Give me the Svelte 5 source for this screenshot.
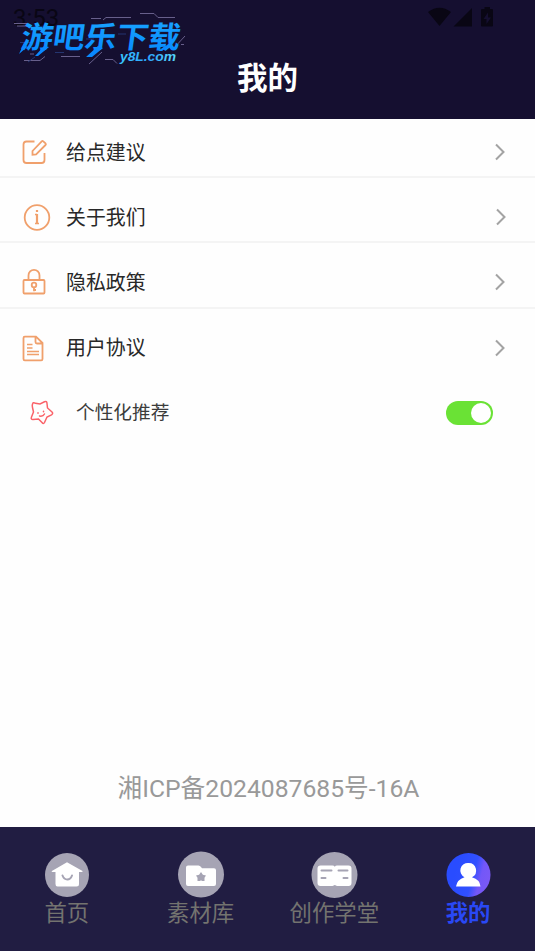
<script>
	let recommend = true;
	let current = 'mine';

	const menus = [
		{ id: 'suggest', name: '给点建议' },
		{ id: 'about', name: '关于我们' },
		{ id: 'privacy', name: '隐私政策' },
		{ id: 'agreement', name: '用户协议' }
	];

	const tabs = [
		{ id: 'home', name: '首页' },
		{ id: 'material', name: '素材库' },
		{ id: 'school', name: '创作学堂' },
		{ id: 'mine', name: '我的' }
	];

	function toggleRecommend() {
		recommend = !recommend;
	}
</script>

<div class="page">
	<header>
		<div class="status">
			<span class="time">3:53</span>
			<svg class="signals" width="72" height="28" viewBox="0 0 72 28">
				<path d="M1 12Q12.500 3.500 24 12L12.500 26Z" />
				<path d="M45 8v18.500H26.500z" />
				<path fill-rule="evenodd" d="M55 9h2.500V7h5.500v2H65q1 0 1 1v15.500q0 1-1 1H55q-1 0-1-1V10q0-1 1-1zM61 12.500l-4.500 6.500h3v5l4.500-6.500h-3z" />
			</svg>
		</div>
		<h1>我的</h1>
		<svg class="brand" width="190" height="72" viewBox="0 0 190 72">
			<defs>
				<linearGradient id="brandBlue" x1="0" y1="0" x2="0" y2="1">
					<stop offset="0" stop-color="#1ca8ff" />
					<stop offset="1" stop-color="#0688ff" />
				</linearGradient>
				<linearGradient id="siteBlue" x1="0" y1="0" x2="1" y2="0">
					<stop offset="0" stop-color="#38c8ff" />
					<stop offset=".5" stop-color="#2da2ff" />
					<stop offset="1" stop-color="#58dafa" />
				</linearGradient>
			</defs>
			<g class="circuit">
				<path d="M14 23.500h13M17 26h10M91 18.500h10M103 20l3-2.500h25M140 13.500h14l4 4M158 17.500h17M30 54h4M24 60.500h16l5-4M61 56.500h19M89 64l13-12M105 59.500h8l4 4M173 49l12-13M181 44.500h3" />
				<path class="dim" d="M20 42.500h12M86 39h8M118 34h8M55 52.500h9M28 62l7-5" />
			</g>
			<g transform="translate(20 47.500) skewX(-8)">
				<text class="brand-name" textLength="159" lengthAdjust="spacingAndGlyphs" y="0">游吧乐下载</text>
			</g>
			<path class="tails" d="M24 43l-5 11 8-7zM44 46l-9 10h3l11-9zM98 46l-12 11h6l11-9zM165 46l-7 5h4l8-6z" />
			<text class="site" x="120" y="61" textLength="56" lengthAdjust="spacingAndGlyphs">y8L.com</text>
		</svg>
	</header>

	<main>
		<ul class="menu">
			{#each menus as menu}
				<li class={menu.id}>
					<svg class="icon" width="28" height="28" viewBox="0 0 28 28">
						{#if menu.id === 'suggest'}
							<path d="M13.500 3.500H5.500q-3 0-3 3v15.500q0 3 3 3H20.500q3 0 3-3V15" />
							<path d="M11.500 13l9.200-9.700q.8-.8 1.600 0l2.200 2.100q.8.800 0 1.600l-9.400 9.400-3.600.3z" />
						{:else if menu.id === 'about'}
							<circle cx="16" cy="14.500" r="12.300" />
							<path class="bold" d="M16 11v9.500M16 7v2" />
							<path class="thin" d="M14 11.500h2M14 20.500h4" />
						{:else if menu.id === 'privacy'}
							<rect x="2.500" y="12" width="21" height="13.500" rx="1" />
							<path d="M7.500 12V7.500a5.500 5.700 0 0 1 11 0V12M13 19v4.300M13 22h2" />
							<circle cx="13" cy="17" r="2.300" />
						{:else}
							<path d="M2.500 4q0-1.300 1.300-1.300H15L21.500 9v16q0 1.300-1.300 1.300H3.800q-1.300 0-1.300-1.300zM14.500 3v5q0 1.500 1.500 1.500h5.500" />
							<path class="thin" d="M6 10.500h5.500M6 14h5.500M6 17.500h12M6 20.500h12" />
						{/if}
					</svg>
					<span class="name">{menu.name}</span>
					<svg class="arrow" width="12" height="20" viewBox="0 0 12 20">
						<path d="M2 2.500L9.500 10 2 17.500" />
					</svg>
				</li>
			{/each}
		</ul>

		<div class="recommend">
			<svg class="star" width="26" height="26" viewBox="0 0 26 26">
				<path d="M3.500 4Q4 2 6.500 3.300L11 4 15.500 1.800Q18 .7 18 3.500L18.500 8 23 12Q24.500 13.500 22.500 14.800L18 17 15.500 22.500Q14.500 24.500 13 22.500L9.500 19 4 19.500Q1.500 19.500 2.500 17L4.500 12 3.500 7.500Q3 5.500 3.500 4Z" />
				<path d="M9 12.800v.4M14.500 11.300v.4M10.500 16q3.500.7 5-2" />
			</svg>
			<span class="label">个性化推荐</span>
			<button class="switch" class:on={recommend} aria-label="个性化推荐" on:click={toggleRecommend}>
				<i></i>
			</button>
		</div>

		<p class="icp">湘ICP备2024087685号-16A</p>
	</main>

	<nav>
		{#each tabs as tab}
			<button class="tab {tab.id}" class:active={current === tab.id} on:click={() => (current = tab.id)}>
				<svg width="46" height="46" viewBox="0 0 46 46">
					{#if tab.id === 'home'}
						<circle class="disc" cx="23" cy="23" r="22" />
						<path class="shape" d="M23 10.300l15.500 8.700q.5 1-.8 1H35v12q0 2.500-2.500 2.500h-19Q11.500 34.500 11.500 32V20H8.500q-1.500 0-.6-1z" />
						<path class="smile" d="M18.500 23.500q1.500 4 4.800 4t4.700-4" />
					{:else if tab.id === 'material'}
						<circle class="disc" cx="23" cy="22.500" r="23" />
						<path class="shape" d="M8 15.500q0-2 2-2h10.500q1.500 0 2.500 1.500l1 1.300h12q2 0 2 2V32q0 2-2 2H10q-2 0-2-2z" />
						<path class="hole" d="M23 20l1.900 2.700 3.100.7-1.500 2.400v3.200h-2.500l-1-.8-1 .8h-2.500v-3.200l-1.500-2.400 3.100-.7z" />
					{:else if tab.id === 'school'}
						<circle class="disc" cx="23.500" cy="23" r="23" />
						<path class="shape" d="M9.500 13.500h12q1.500 0 2.300 1.300Q24.500 13.500 26 13.500H37.500q3 0 3 3v14.500q0 3-3 3H26l-2.200-1-2.300 1h-12q-3 0-3-3v-14.500q0-3 3-3z" />
						<path class="lines" d="M10.500 18.500h10M10.500 26h4M27.500 18.500h9M32.500 26h4" />
					{:else}
						<defs>
							<linearGradient id="mineBg" x1=".2" y1=".4" x2="1" y2=".62">
								<stop offset="0" stop-color="#294cff" />
								<stop offset=".5" stop-color="#3150ff" />
								<stop offset=".72" stop-color="#7357f8" />
								<stop offset="1" stop-color="#7b59f5" />
							</linearGradient>
						</defs>
						<circle cx="23.500" cy="23" r="22" fill="url(#mineBg)" />
						<path class="shape" d="M23.500 11a7.500 7.500 0 0 1 3.500 14.200Q35 27.500 35.500 34.500h-24.500Q12 27.500 19.500 25.200A7.500 7.500 0 0 1 23.500 11z" />
					{/if}
				</svg>
				<span>{tab.name}</span>
			</button>
		{/each}
	</nav>
</div>

<style>
	:global(body) {
		margin: 0;
		background: #fff;
	}

	.page {
		display: flex;
		flex-direction: column;
		width: 535px;
		height: 951px;
		overflow: hidden;
		background: #fefefe;
		font-family: Roboto, "Noto Sans CJK SC", sans-serif;
	}

	header {
		position: relative;
		height: 119px;
		flex: none;
		background: #150f30;
	}

	.status {
		display: flex;
		justify-content: space-between;
		height: 38px;
		padding: 0 36px 0 13px;
		color: #090614;
	}

	.time {
		padding-top: 5px;
		font-size: 24px;
		line-height: 27px;
	}

	.signals {
		fill: #090614;
	}

	h1 {
		margin: 21px 0 0;
		color: #fff;
		font-size: 30.500px;
		line-height: 40px;
		font-weight: 700;
		text-align: center;
	}

	.brand {
		position: absolute;
		left: 0;
		top: 0;
	}

	.brand-name {
		font-family: "Noto Sans CJK SC", sans-serif;
		font-size: 30px;
		font-weight: 700;
		fill: url(#brandBlue);
	}

	.site {
		font-family: "Liberation Sans", sans-serif;
		font-size: 13px;
		font-weight: 700;
		font-style: italic;
		fill: url(#siteBlue);
	}

	.tails {
		fill: #0a88ff;
	}

	.circuit path {
		fill: none;
		stroke: #675f8b;
		stroke-width: 1;
	}

	.circuit .dim {
		stroke: #243570;
	}

	main {
		display: flex;
		flex-direction: column;
		height: 708px;
		flex: none;
	}

	.menu {
		margin: 0;
		padding: 0;
		list-style: none;
	}

	li {
		display: flex;
		align-items: center;
		box-sizing: border-box;
		height: 65.300px;
		padding: 15px 29px 0 21px;
		border-bottom: 2px solid #f4f4f4;
	}

	li.suggest {
		height: 59px;
		padding-top: 9px;
	}

	li.agreement {
		padding-top: 15px;
		border-bottom-color: transparent;
	}

	.icon {
		fill: none;
		stroke: #f0a06c;
		stroke-width: 1.800;
		overflow: visible;
	}

	.icon .thin {
		stroke-width: 1.500;
	}

	.icon .bold {
		stroke-width: 2.200;
	}

	.name {
		flex: 1;
		margin-left: 17px;
		padding-top: 3px;
		color: #282828;
		font-size: 19.900px;
		line-height: 30px;
	}

	.arrow {
		fill: none;
		stroke: #a3a3a3;
		stroke-width: 2;
	}

	.about .arrow {
		margin-right: -1px;
	}

	.recommend {
		display: flex;
		align-items: center;
		box-sizing: border-box;
		height: 66px;
		padding: 12px 42px 0 29px;
	}

	.star {
		fill: none;
		stroke: #fa6269;
		stroke-width: 1.500;
		stroke-linecap: round;
	}

	.label {
		flex: 1;
		margin-left: 21px;
		padding-top: 1px;
		color: #3b3b3b;
		font-size: 18.700px;
		line-height: 28px;
	}

	.switch {
		display: flex;
		width: 47px;
		height: 24px;
		padding: 2px;
		border: 0;
		border-radius: 12px;
		background: #ccc;
	}

	.switch i {
		width: 20px;
		height: 20px;
		border-radius: 50%;
		background: #fff;
	}

	.switch.on {
		justify-content: flex-end;
		background: #6ae235;
	}

	.icp {
		margin: auto 0 20px;
		padding-left: 2px;
		color: #999;
		font-size: 24.700px;
		line-height: 36px;
		text-align: center;
	}

	nav {
		display: flex;
		height: 124px;
		flex: none;
		background: #211d42;
	}

	.tab {
		display: flex;
		flex: 1;
		flex-direction: column;
		align-items: center;
		padding: 25px 0 0;
		border: 0;
		background: none;
		color: #73736f;
		font: inherit;
	}

	.tab svg {
		overflow: visible;
	}

	.tab span {
		font-size: 22.400px;
		line-height: 30px;
		white-space: nowrap;
	}

	.tab.active {
		color: #2948f5;
	}

	.tab.active span {
		font-weight: 700;
	}

	.disc,
	.hole {
		fill: #a6a4b4;
	}

	.shape {
		fill: #fff;
	}

	.smile,
	.lines {
		fill: none;
		stroke: #a6a4b4;
		stroke-width: 2;
		stroke-linecap: round;
	}
</style>
